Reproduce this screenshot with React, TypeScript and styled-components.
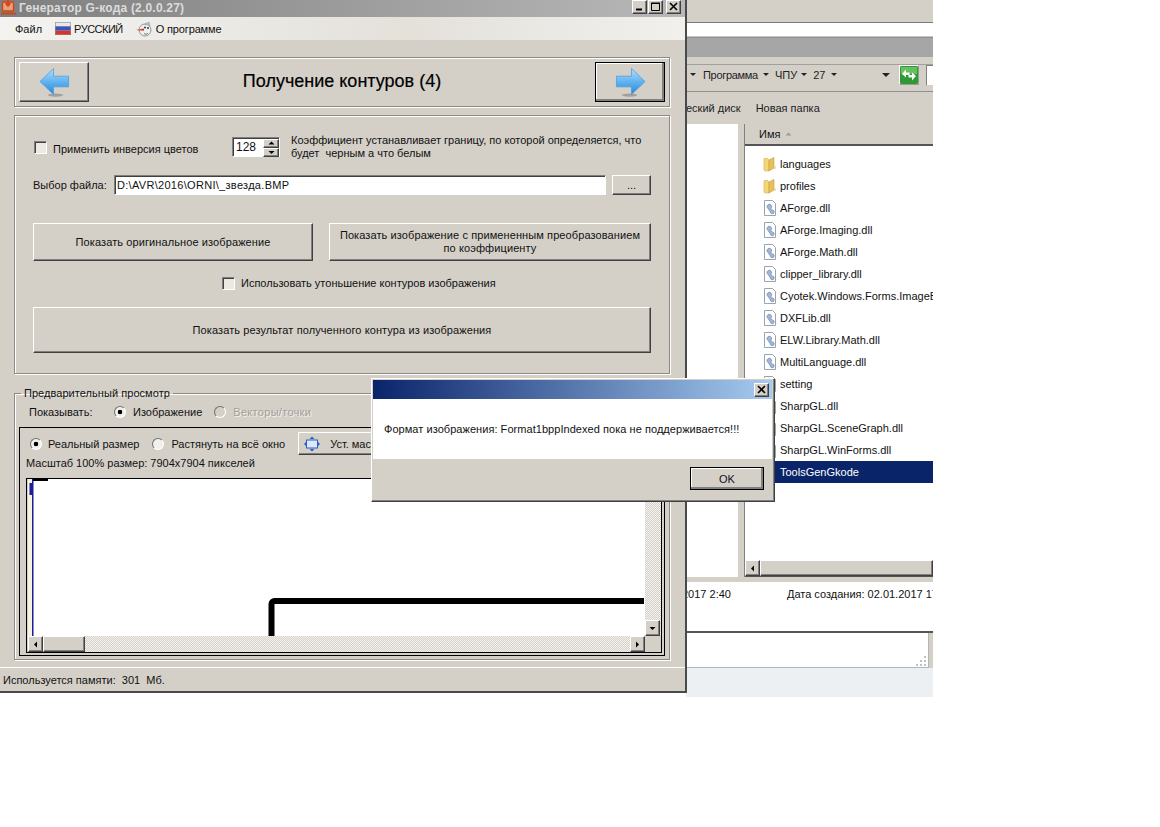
import React from "react";
import styled, { createGlobalStyle, css } from "styled-components";

const GlobalStyle = createGlobalStyle`
  html, body {
    margin: 0;
    padding: 0;
    background: #fff;
  }
  * {
    box-sizing: border-box;
  }
`;

const face = "#d4d0c8";

const raised = css`
  background: ${face};
  border: 1px solid;
  border-color: #fff #404040 #404040 #fff;
  box-shadow: inset -1px -1px 0 #808080;
`;

const sunken = css`
  border: 1px solid;
  border-color: #808080 #fff #fff #808080;
  box-shadow: inset 1px 1px 0 #404040;
`;

const dither = css`
  background-color: #f4f3f0;
  background-image: conic-gradient(#d4d0c8 25%, #f4f3f0 0 50%, #d4d0c8 0 75%, #f4f3f0 0);
  background-size: 2px 2px;
`;

const Desktop = styled.div`
  position: relative;
  width: 1160px;
  height: 827px;
  overflow: hidden;
  background: #fff;
  font-family: "Liberation Sans", Arial, sans-serif;
  font-size: 11px;
  color: #111;
`;

/* ---------- main window ---------- */

const MainWindow = styled.div`
  position: absolute;
  left: 0;
  top: 0;
  width: 687px;
  height: 693px;
  display: flex;
  flex-direction: column;
  background: ${face};
  border-right: 2px solid #4a4a4a;
  border-bottom: 2px solid #4a4a4a;
  z-index: 2;
`;

const TitleBar = styled.div`
  height: 17px;
  flex: none;
  display: flex;
  align-items: center;
  padding: 0 4px 2px 1px;
  background: linear-gradient(90deg, #7f7f7f, #b8b8b8);
  color: #dcdcdc;
  font-size: 12px;
  font-weight: 700;
  letter-spacing: 0.2px;
`;

const TitleText = styled.span`
  margin-left: 2px;
  flex: 1;
`;

const CaptionButtons = styled.div`
  display: flex;
  margin-top: -2px;
`;

const CaptionButton = styled.div<{ $gap?: number }>`
  ${raised}
  width: 15px;
  height: 14px;
  margin-left: ${(p) => p.$gap ?? 0}px;
  display: flex;
  align-items: center;
  justify-content: center;
`;

const MenuBar = styled.div`
  height: 23px;
  flex: none;
  display: flex;
  align-items: center;
  padding: 0 0 0 15px;
  background: linear-gradient(90deg, #f4f3f0, #e4e1db 60%, #f1f0ed);
`;

const MenuItem = styled.span<{ $gap?: number; $track?: number; $iconGap?: number }>`
  display: flex;
  align-items: center;
  gap: ${(p) => p.$iconGap ?? 3}px;
  margin-left: ${(p) => p.$gap ?? 0}px;
  letter-spacing: ${(p) => p.$track ?? 0}px;
`;

const Content = styled.div`
  flex: none;
  display: flex;
  flex-direction: column;
  padding: 17px 15px 0 14px;
`;

const HeaderBox = styled.div`
  height: 50px;
  flex: none;
  display: flex;
  align-items: center;
  justify-content: space-between;
  padding: 0 4px;
  border: 1px solid #8c8a85;
  box-shadow: inset 1px 1px 0 #fff, 1px 1px 0 #fff;
`;

const NavButton = styled.div<{ $default?: boolean }>`
  ${raised}
  width: 70px;
  height: 40px;
  display: flex;
  align-items: center;
  justify-content: center;
  ${(p) =>
    p.$default &&
    css`
      outline: 1px solid #000;
      outline-offset: -1px;
      box-shadow: inset -2px -2px 0 #808080, inset 1px 1px 0 #fff;
    `}
`;

const PageTitle = styled.h1`
  margin: 0 0 2px;
  font-size: 18px;
  font-weight: 400;
  -webkit-text-stroke: 0.2px #000;
  color: #000;
`;

const SettingsBox = styled.div`
  height: 259px;
  flex: none;
  margin-top: 8px;
  display: flex;
  flex-direction: column;
  padding: 18px 18px 0 18px;
  border: 1px solid #8c8a85;
  box-shadow: inset 1px 1px 0 #fff, 1px 1px 0 #fff;
`;

const ThresholdRow = styled.div`
  height: 26px;
  display: flex;
  align-items: center;
`;

const CheckBox = styled.span<{ $gap?: number }>`
  ${sunken}
  width: 13px;
  height: 13px;
  flex: none;
  margin-left: ${(p) => p.$gap ?? 0}px;
  background: #ece9e3;
`;

const Label = styled.span<{ $gap?: number; $width?: number }>`
  margin-left: ${(p) => p.$gap ?? 0}px;
  ${(p) => p.$width !== undefined && `width: ${p.$width}px; flex: none;`}
  white-space: nowrap;
`;

const Spinner = styled.div`
  ${sunken}
  width: 48px;
  height: 20px;
  flex: none;
  display: flex;
  align-items: center;
  justify-content: space-between;
  padding: 1px 0 1px 3px;
  background: #fff;
  font-size: 12px;
`;

const SpinButtons = styled.div`
  width: 16px;
  height: 17px;
  display: flex;
  flex-direction: column;
`;

const SpinButton = styled.div`
  ${raised}
  flex: 1;
  display: flex;
  align-items: center;
  justify-content: center;
`;

const Hint = styled.div`
  margin-left: 11px;
  line-height: 13px;
  white-space: pre;
`;

const FileRow = styled.div`
  margin-top: 15px;
  display: flex;
  align-items: center;
  height: 20px;
`;

const FileInput = styled.div`
  ${sunken}
  width: 492px;
  height: 20px;
  flex: none;
  display: flex;
  align-items: center;
  padding-left: 2px;
  margin-left: 10px;
  background: #fff;
  letter-spacing: 0.3px;
`;

const Browse = styled.div`
  ${raised}
  width: 39px;
  height: 20px;
  margin-left: 6px;
  display: flex;
  align-items: center;
  justify-content: center;
`;

const ButtonRow = styled.div`
  margin-top: 28px;
  display: flex;
  justify-content: space-between;
`;

const PushButton = styled.div<{ $w: number; $h: number }>`
  ${raised}
  width: ${(p) => p.$w}px;
  height: ${(p) => p.$h}px;
  display: flex;
  align-items: center;
  justify-content: center;
  text-align: center;
  line-height: 13px;
  letter-spacing: 0.1px;
`;

const ThinRow = styled.div`
  margin-top: 15px;
  height: 14px;
  display: flex;
  align-items: center;
  padding-left: 189px;
`;

const WideButtonRow = styled.div`
  margin-top: 17px;
`;

const PreviewBox = styled.fieldset`
  height: 273px;
  flex: none;
  margin: 13px 0 0;
  padding: 0 4px 4px 4px;
  display: flex;
  flex-direction: column;
  border: 1px solid #8c8a85;
  box-shadow: inset 1px 1px 0 #fff, 1px 1px 0 #fff;
  min-width: 0;
`;

const PreviewLegend = styled.legend`
  margin-left: 2px;
  padding: 0 3px 0 3px;
  letter-spacing: 0.05px;
`;

const ShowRow = styled.div`
  height: 20px;
  margin-top: 3px;
  display: flex;
  align-items: center;
  padding-left: 10px;
`;

const Radio = styled.span<{ $on?: boolean; $gap?: number; $off?: boolean }>`
  width: 12px;
  height: 12px;
  flex: none;
  margin-left: ${(p) => p.$gap ?? 0}px;
  border-radius: 50%;
  border: 1px solid;
  border-color: #707070 #fff #fff #707070;
  background: ${(p) =>
    p.$on ? "radial-gradient(circle, #000 0 2px, #f2f0ec 2.6px)" : p.$off ? face : "#f2f0ec"};
`;

const Muted = styled.span`
  margin-left: 7px;
  color: #a3a098;
  letter-spacing: 0.3px;
  text-shadow: 1px 1px 0 #f4f2ee;
`;

const PreviewFrame = styled.div`
  flex: 1;
  margin-top: 5px;
  display: flex;
  flex-direction: column;
  border: 1px solid #000;
  box-shadow: inset 0 0 0 1px #d4d0c8;
  padding: 4px 2px 2px 6px;
  min-height: 0;
`;

const ZoomRow = styled.div`
  height: 23px;
  flex: none;
  display: flex;
  align-items: center;
  padding-left: 4px;
`;

const FitButton = styled.div`
  ${raised}
  width: 200px;
  height: 23px;
  flex: none;
  margin-left: 13px;
  display: flex;
  align-items: center;
  padding-left: 5px;
  gap: 10px;
`;

const ScaleLine = styled.div`
  height: 14px;
  margin-top: 2px;
  flex: none;
`;

const ScrollArea = styled.div`
  flex: 1;
  margin-top: 7px;
  min-height: 0;
  display: grid;
  grid-template-columns: 1fr 16px;
  grid-template-rows: 1fr 16px;
  border: 1px solid #000;
  padding-left: 1px;
  background: ${face};
`;

const Canvas = styled.div`
  background: #fff;
  overflow: hidden;
  min-height: 0;
`;

const VTrack = styled.div`
  ${dither}
  display: flex;
  flex-direction: column;
  justify-content: flex-end;
`;

const HTrack = styled.div`
  ${dither}
  display: flex;
  align-items: stretch;
  justify-content: space-between;
`;

const HThumbGroup = styled.div`
  display: flex;
`;

const ScrollButton = styled.div`
  ${raised}
  width: 15px;
  height: 16px;
  flex: none;
  display: flex;
  align-items: center;
  justify-content: center;
`;

const Thumb = styled.div<{ $w?: number }>`
  ${raised}
  width: ${(p) => p.$w ?? 42}px;
  flex: none;
`;

const Corner = styled.div`
  background: ${face};
`;

const StatusBar = styled.div`
  flex: 1;
  display: flex;
  align-items: center;
  padding-left: 3px;
  margin-top: 7px;
  border-top: 1px solid #fff;
  white-space: pre;
`;

/* ---------- explorer behind ---------- */

const Explorer = styled.div`
  position: absolute;
  left: 686px;
  top: 0;
  width: 247px;
  height: 697px;
  display: flex;
  flex-direction: column;
  background: ${face};
`;

const ExpTop = styled.div`
  height: 22px;
  flex: none;
`;

const ExpWhite = styled.div`
  height: 15px;
  flex: none;
  background: #fff;
  border-top: 1px solid #7c7c7c;
  border-bottom: 1px solid #c8c8c8;
  box-shadow: inset 0 -1px 0 #fff;
`;

const ExpTitle = styled.div`
  height: 20px;
  flex: none;
  background: #a6a6a6;
  border-top: 1px solid #8f8f8f;
`;

const AddressRow = styled.div`
  height: 28px;
  margin-top: 7px;
  flex: none;
  display: flex;
  align-items: flex-start;
  padding: 0 0 0 4px;
  border-top: 1px solid #a0a0a0;
  border-bottom: 1px solid #8f8f8f;
  color: #222;
`;

const Crumb = styled.span<{ $gap?: number; $track?: number }>`
  display: flex;
  align-items: center;
  height: 19px;
  margin-left: ${(p) => p.$gap ?? 0}px;
  letter-spacing: ${(p) => p.$track ?? 0}px;
`;

const DownTri = styled.span<{ $size?: number; $gap?: number }>`
  width: 0;
  height: 0;
  flex: none;
  margin-top: 8px;
  margin-left: ${(p) => p.$gap ?? 0}px;
  border-left: ${(p) => p.$size ?? 3}px solid transparent;
  border-right: ${(p) => p.$size ?? 3}px solid transparent;
  border-top: ${(p) => p.$size ?? 3}px solid #222;
`;

const GoButton = styled.div`
  width: 20px;
  height: 20px;
  flex: none;
  margin-left: 9px;
  border: 1px solid;
  border-color: #fff #999 #999 #fff;
`;

const AddressField = styled.div`
  flex: 1;
  height: 20px;
  margin-left: 7px;
  background: #fff;
  border-left: 1px solid #808080;
  border-top: 1px solid #808080;
`;

const ExpToolbar = styled.div`
  height: 32px;
  flex: none;
  display: flex;
  align-items: center;
  white-space: nowrap;
  overflow: hidden;
  color: #222;
`;

const ToolText = styled.span<{ $gap?: number }>`
  margin-left: ${(p) => p.$gap ?? 0}px;
`;

const Panes = styled.div`
  height: 453px;
  flex: none;
  display: flex;
`;

const LeftPane = styled.div`
  width: 52px;
  flex: none;
  background: #fff;
`;

const RightPane = styled.div`
  width: 189px;
  flex: none;
  margin-left: 6px;
  display: flex;
  flex-direction: column;
  background: #fff;
  border-left: 1px solid #808080;
`;

const ListHeader = styled.div`
  height: 22px;
  flex: none;
  display: flex;
  align-items: center;
  gap: 5px;
  padding-left: 14px;
  background: ${face};
  border-bottom: 2px solid #555;
`;

const FileList = styled.div`
  flex: 1;
  padding-top: 7px;
  overflow: hidden;
`;

const FileRowItem = styled.div`
  height: 22px;
  display: flex;
  align-items: center;
  padding-left: 18px;
  white-space: nowrap;

  svg {
    flex: none;
  }
`;

const FileName = styled.span<{ $selected?: boolean }>`
  display: flex;
  align-items: center;
  height: 22px;
  padding-left: 5px;
  margin-left: -2px;
  ${(p) =>
    p.$selected &&
    css`
      flex: 1;
      background: #0a246a;
      color: #fff;
    `}
`;

const ListScroll = styled.div`
  height: 17px;
  flex: none;
  display: flex;
  background: ${face};
  border-bottom: 1px solid #555;
`;

const ListThumb = styled.div`
  ${raised}
  flex: 1;
`;

const DetailsPane = styled.div`
  height: 51px;
  flex: none;
  margin-top: 5px;
  display: flex;
  align-items: flex-start;
  padding-top: 6px;
  background: #fff;
  white-space: nowrap;
  overflow: hidden;
  border-bottom: 2px solid #555;
`;

const ExpStatus = styled.div`
  height: 35px;
  flex: none;
  display: flex;
  align-items: flex-end;
  justify-content: flex-end;
  padding: 0 2px 1px 0;
  background: #fff;
  border-right: 1px solid #b5b5b5;
  border-bottom: 1px solid #b5b5b5;
  margin-right: 4px;
`;

const BottomStrip = styled.div`
  flex: 1;
  background: #ecf0f3;
`;

/* ---------- message dialog ---------- */

const Dialog = styled.div`
  position: absolute;
  left: 371px;
  top: 378px;
  width: 404px;
  height: 124px;
  display: flex;
  flex-direction: column;
  background: ${face};
  border: 1px solid;
  border-color: #fff #404040 #404040 #fff;
  box-shadow: inset -1px -1px 0 #808080;
  padding: 1px 2px 2px 1px;
  z-index: 3;
`;

const DialogTitle = styled.div`
  height: 19px;
  flex: none;
  display: flex;
  align-items: center;
  justify-content: flex-end;
  padding-right: 3px;
  background: linear-gradient(90deg, #0a246a, #a6caf0);
`;

const DialogBody = styled.div`
  height: 60px;
  flex: none;
  display: flex;
  align-items: center;
  padding-left: 11px;
  background: #fff;
  letter-spacing: 0.05px;
`;

const DialogFooter = styled.div`
  flex: 1;
  display: flex;
  align-items: flex-start;
  justify-content: flex-end;
  padding: 8px 8px 0 0;
`;

const OkButton = styled.div`
  ${raised}
  width: 74px;
  height: 23px;
  display: flex;
  align-items: center;
  justify-content: center;
  outline: 1px solid #000;
  outline-offset: -1px;
  box-shadow: inset -2px -2px 0 #808080, inset 1px 1px 0 #fff;
`;

/* ---------- drawings ---------- */

const AppIcon = () => (
  <svg width="16" height="16" viewBox="0 0 16 16" style={{ marginTop: -1 }}>
    <rect x="1.5" y="3" width="11" height="9" rx="1" fill="#e9a078" stroke="#c8481c" strokeWidth="1.4" />
    <path d="M0 14.5h15" stroke="#c8481c" strokeWidth="2" />
    <path d="M7 0v6M4.5 4L7 7l2.5-3" fill="none" stroke="#d8401a" strokeWidth="1.6" />
  </svg>
);

const FlagIcon = () => (
  <svg width="16" height="13" viewBox="0 0 16 13">
    <rect width="16" height="4.3" fill="#e8e8ec" />
    <rect y="4.3" width="16" height="4.4" fill="#3a55b8" />
    <rect y="8.7" width="16" height="4.3" fill="#d8342c" />
    <rect x="0.5" y="0.5" width="15" height="12" fill="none" stroke="#8a8a90" strokeWidth="0.6" />
  </svg>
);

const SnowmanIcon = () => (
  <svg width="16" height="16" viewBox="0 0 16 16">
    <circle cx="9" cy="9" r="6" fill="#eef0f0" stroke="#8a9a9a" />
    <path d="M9 3l4-2 1 4z" fill="#b9c6c8" stroke="#808c8c" strokeWidth="0.5" />
    <circle cx="9" cy="6.5" r="0.9" fill="#222" />
    <circle cx="12" cy="7" r="0.9" fill="#222" />
    <path d="M0 9l8-1.6v2.4z" fill="#d23a24" />
    <path d="M8 12.5c1.5 1 3 .8 4-.2" fill="none" stroke="#555" strokeWidth="0.8" />
  </svg>
);

const ArrowIcon = ({ id, flip }: { id: string; flip?: boolean }) => (
  <svg width="31" height="31" viewBox="0 0 32 31" style={flip ? { transform: "scaleX(-1)" } : undefined}>
    <defs>
      <linearGradient id={id} x1="0" y1="0" x2="0" y2="1">
        <stop offset="0" stopColor="#b4defb" />
        <stop offset="0.5" stopColor="#62b4f0" />
        <stop offset="1" stopColor="#2a86da" />
      </linearGradient>
    </defs>
    <ellipse cx="17" cy="28.5" rx="8" ry="1.6" fill="#8f8c86" opacity="0.7" />
    <path d="M1 14.5L15 1v8h15.5v11H15v8z" fill={`url(#${id})`} stroke="#4d9ce0" strokeWidth="0.8" />
  </svg>
);

const FolderIcon = () => (
  <svg width="14" height="16" viewBox="0 0 14 16">
    <path d="M1 2.5h4l1 1.5v11H2.5A1.5 1.5 0 0 1 1 13.5z" fill="#f3d678" stroke="#d8b24c" strokeWidth="0.6" />
    <path d="M6 4l5-2.5V12l-5 3z" fill="#e8bf58" stroke="#c99f3e" strokeWidth="0.6" />
    <rect x="11" y="10" width="2" height="3" fill="#e9e0b8" />
  </svg>
);

const DllIcon = () => (
  <svg width="14" height="16" viewBox="0 0 14 16">
    <path d="M1.5 0.5h8l3 3v12h-11z" fill="#fff" stroke="#9aa4ad" />
    <path d="M4 6.5a2.3 2.3 0 1 1 3.8 1.8L9.6 10a1.9 1.9 0 1 1-2.2 2L5 8.5A2.3 2.3 0 0 1 4 6.5z" fill="#a4b6d4" stroke="#5f7aa6" strokeWidth="0.6" />
  </svg>
);

const PlainFileIcon = () => (
  <svg width="14" height="16" viewBox="0 0 14 16">
    <path d="M1.5 0.5h8l3 3v12h-11z" fill="#fff" stroke="#9aa4ad" />
  </svg>
);

const ExeIcon = () => (
  <svg width="14" height="16" viewBox="0 0 14 16">
    <rect x="1" y="3" width="12" height="9" fill="#e9a078" stroke="#c8481c" strokeWidth="1.4" />
    <path d="M0 14.5h14" stroke="#c8481c" strokeWidth="2" />
  </svg>
);

const GoIcon = () => (
  <svg width="18" height="18" viewBox="0 0 18 18">
    <rect width="18" height="18" rx="1.5" fill="#2f9a35" />
    <rect x="1" y="1" width="16" height="7" fill="#7fd074" opacity="0.7" />
    <path d="M2 8l4-4.5V6.5h3.5v2.5H6V11.5zM16 10l-4 4.5V11.5H8.5V9H12V6.5z" fill="#fff" />
  </svg>
);

const FitIcon = () => (
  <svg width="16" height="16" viewBox="0 0 16 16">
    <rect x="2.5" y="4" width="11" height="8" fill="#dfe8f6" stroke="#2a5fc4" />
    <path d="M8 0.5L5.5 3h5zM8 15.5L5.5 13h5zM0 8l2 -2v4zM16 8l-2 -2v4z" fill="#2a5fc4" />
  </svg>
);

const Cross = ({ size = 9 }: { size?: number }) => (
  <svg width={size} height={size} viewBox="0 0 9 9">
    <path d="M1 1l7 7M8 1L1 8" stroke="#000" strokeWidth="1.6" fill="none" />
  </svg>
);

const MinGlyph = () => (
  <svg width="9" height="9" viewBox="0 0 9 9">
    <rect x="1" y="6.5" width="6" height="2" fill="#000" />
  </svg>
);

const MaxGlyph = () => (
  <svg width="9" height="9" viewBox="0 0 9 9">
    <path d="M0.5 1.5h8v7h-8z" fill="none" stroke="#000" />
    <rect x="0" y="0.5" width="9" height="1.5" fill="#000" />
  </svg>
);

const Tri = ({ dir, color = "#000" }: { dir: "up" | "down" | "left" | "right"; color?: string }) => {
  const paths = {
    up: "M0.5 4.5L3.5 1.5L6.5 4.5z",
    down: "M0.5 2L3.5 5L6.5 2z",
    left: "M5 0.5L2 3.5L5 6.5z",
    right: "M2 0.5L5 3.5L2 6.5z",
  };
  return (
    <svg width="7" height="7" viewBox="0 0 7 7">
      <path d={paths[dir]} fill={color} />
    </svg>
  );
};

// fragment of the opened bitmap: ruler on the left and the thick contour
const BitmapDrawing = () => (
  <svg width="616" height="157" viewBox="0 0 616 157" style={{ display: "block" }}>
    <rect x="0" y="0" width="4" height="157" fill="#f6f4df" />
    <rect x="4" y="0" width="1.5" height="157" fill="#1c1c9c" />
    <path d="M3 4v12" stroke="#1c1c9c" strokeWidth="3" />
    <rect x="5" y="0" width="15" height="2" fill="#000" />
    <path d="M243.5 157V125a3 3 0 0 1 3-3H616" fill="none" stroke="#000" strokeWidth="6" />
  </svg>
);

const files = [
  { name: "languages", icon: <FolderIcon /> },
  { name: "profiles", icon: <FolderIcon /> },
  { name: "AForge.dll", icon: <DllIcon /> },
  { name: "AForge.Imaging.dll", icon: <DllIcon /> },
  { name: "AForge.Math.dll", icon: <DllIcon /> },
  { name: "clipper_library.dll", icon: <DllIcon /> },
  { name: "Cyotek.Windows.Forms.ImageBox.dll", icon: <DllIcon /> },
  { name: "DXFLib.dll", icon: <DllIcon /> },
  { name: "ELW.Library.Math.dll", icon: <DllIcon /> },
  { name: "MultiLanguage.dll", icon: <DllIcon /> },
  { name: "setting", icon: <PlainFileIcon /> },
  { name: "SharpGL.dll", icon: <DllIcon /> },
  { name: "SharpGL.SceneGraph.dll", icon: <DllIcon /> },
  { name: "SharpGL.WinForms.dll", icon: <DllIcon /> },
  { name: "ToolsGenGkode", icon: <ExeIcon />, selected: true },
];

function ExplorerWindow() {
  return (
    <Explorer>
      <ExpTop />
      <ExpWhite />
      <ExpTitle />
      <AddressRow>
        <DownTri $gap={0} />
        <Crumb $gap={7} $track={-0.3}>
          Программа
        </Crumb>
        <DownTri $gap={5} />
        <Crumb $gap={6}>ЧПУ</Crumb>
        <DownTri $gap={4} />
        <Crumb $gap={6}>27</Crumb>
        <DownTri $gap={6} />
        <DownTri $size={4} $gap={45} />
        <GoButton>
          <GoIcon />
        </GoButton>
        <AddressField />
      </AddressRow>
      <ExpToolbar>
        <ToolText>еский диск</ToolText>
        <ToolText $gap={15}>Новая папка</ToolText>
      </ExpToolbar>
      <Panes>
        <LeftPane />
        <RightPane>
          <ListHeader>
            Имя
            <Tri dir="up" color="#9c9a94" />
          </ListHeader>
          <FileList>
            {files.map((f) => (
              <FileRowItem key={f.name}>
                {f.icon}
                <FileName $selected={f.selected}>{f.name}</FileName>
              </FileRowItem>
            ))}
          </FileList>
          <ListScroll>
            <ScrollButton>
              <Tri dir="left" />
            </ScrollButton>
            <ListThumb />
          </ListScroll>
        </RightPane>
      </Panes>
      <DetailsPane>
        <ToolText $gap={-4}>2017 2:40</ToolText>
        <ToolText $gap={56}>Дата создания: 02.01.2017 17:20</ToolText>
      </DetailsPane>
      <ExpStatus>
        <svg width="12" height="10" viewBox="0 0 12 10">
          <path d="M10 0h2v2h-2zM6 4h2v2H6zM10 4h2v2h-2zM2 8h2v2H2zM6 8h2v2H6zM10 8h2v2h-2z" fill="#c0c0c0" />
        </svg>
      </ExpStatus>
      <BottomStrip />
    </Explorer>
  );
}

function GeneratorWindow() {
  return (
    <MainWindow>
      <TitleBar>
        <AppIcon />
        <TitleText>Генератор G-кода (2.0.0.27)</TitleText>
        <CaptionButtons>
          <CaptionButton>
            <MinGlyph />
          </CaptionButton>
          <CaptionButton $gap={1}>
            <MaxGlyph />
          </CaptionButton>
          <CaptionButton $gap={3}>
            <Cross />
          </CaptionButton>
        </CaptionButtons>
      </TitleBar>
      <MenuBar>
        <MenuItem>Файл</MenuItem>
        <MenuItem $gap={13} $track={-0.5}>
          <FlagIcon />
          РУССКИЙ
        </MenuItem>
        <MenuItem $gap={13} $track={-0.15} $iconGap={4}>
          <SnowmanIcon />
          О программе
        </MenuItem>
      </MenuBar>
      <Content>
        <HeaderBox>
          <NavButton>
            <ArrowIcon id="arrow-left" />
          </NavButton>
          <PageTitle>Получение контуров (4)</PageTitle>
          <NavButton $default>
            <ArrowIcon id="arrow-right" flip />
          </NavButton>
        </HeaderBox>
        <SettingsBox>
          <ThresholdRow>
            <CheckBox $gap={1} style={{ marginTop: 1 }} />
            <Label $gap={6} $width={179} style={{ marginTop: 3 }}>
              Применить инверсия цветов
            </Label>
            <Spinner>
              128
              <SpinButtons>
                <SpinButton>
                  <Tri dir="up" />
                </SpinButton>
                <SpinButton>
                  <Tri dir="down" />
                </SpinButton>
              </SpinButtons>
            </Spinner>
            <Hint>{"Коэффициент устанавливает границу, по которой определяется, что\nбудет  черным а что белым"}</Hint>
          </ThresholdRow>
          <FileRow>
            <Label $width={71}>Выбор файла:</Label>
            <FileInput>D:\AVR\2016\ORNI\_звезда.BMP</FileInput>
            <Browse>...</Browse>
          </FileRow>
          <ButtonRow>
            <PushButton $w={280} $h={38}>
              Показать оригинальное изображение
            </PushButton>
            <PushButton $w={322} $h={38}>
              Показать изображение с примененным преобразованием
              <br />
              по коэффициенту
            </PushButton>
          </ButtonRow>
          <ThinRow>
            <CheckBox />
            <Label $gap={6}>Использовать утоньшение контуров изображения</Label>
          </ThinRow>
          <WideButtonRow>
            <PushButton $w={618} $h={46}>
              Показать результат полученного контура из изображения
            </PushButton>
          </WideButtonRow>
        </SettingsBox>
        <PreviewBox>
          <PreviewLegend>Предварительный просмотр</PreviewLegend>
          <ShowRow>
            <Label $width={85}>Показывать:</Label>
            <Radio $on />
            <Label $gap={7}>Изображение</Label>
            <Radio $off $gap={12} />
            <Muted>Векторы/точки</Muted>
          </ShowRow>
          <PreviewFrame>
            <ZoomRow>
              <Radio $on />
              <Label $gap={6}>Реальный размер</Label>
              <Radio $gap={13} />
              <Label $gap={7}>Растянуть на всё окно</Label>
              <FitButton>
                <FitIcon />
                Уст. масштаб
              </FitButton>
            </ZoomRow>
            <ScaleLine>Масштаб 100% размер: 7904x7904 пикселей</ScaleLine>
            <ScrollArea>
              <Canvas>
                <BitmapDrawing />
              </Canvas>
              <VTrack>
                <ScrollButton>
                  <Tri dir="down" />
                </ScrollButton>
              </VTrack>
              <HTrack>
                <HThumbGroup>
                  <ScrollButton>
                    <Tri dir="left" />
                  </ScrollButton>
                  <Thumb />
                </HThumbGroup>
                <ScrollButton>
                  <Tri dir="right" />
                </ScrollButton>
              </HTrack>
              <Corner />
            </ScrollArea>
          </PreviewFrame>
        </PreviewBox>
      </Content>
      <StatusBar>{"Используется памяти:  301  Мб."}</StatusBar>
    </MainWindow>
  );
}

function MessageDialog() {
  return (
    <Dialog>
      <DialogTitle>
        <CaptionButton>
          <Cross />
        </CaptionButton>
      </DialogTitle>
      <DialogBody>Формат изображения: Format1bppIndexed пока не поддерживается!!!</DialogBody>
      <DialogFooter>
        <OkButton>OK</OkButton>
      </DialogFooter>
    </Dialog>
  );
}

export default function App() {
  return (
    <Desktop>
      <GlobalStyle />
      <ExplorerWindow />
      <GeneratorWindow />
      <MessageDialog />
    </Desktop>
  );
}
